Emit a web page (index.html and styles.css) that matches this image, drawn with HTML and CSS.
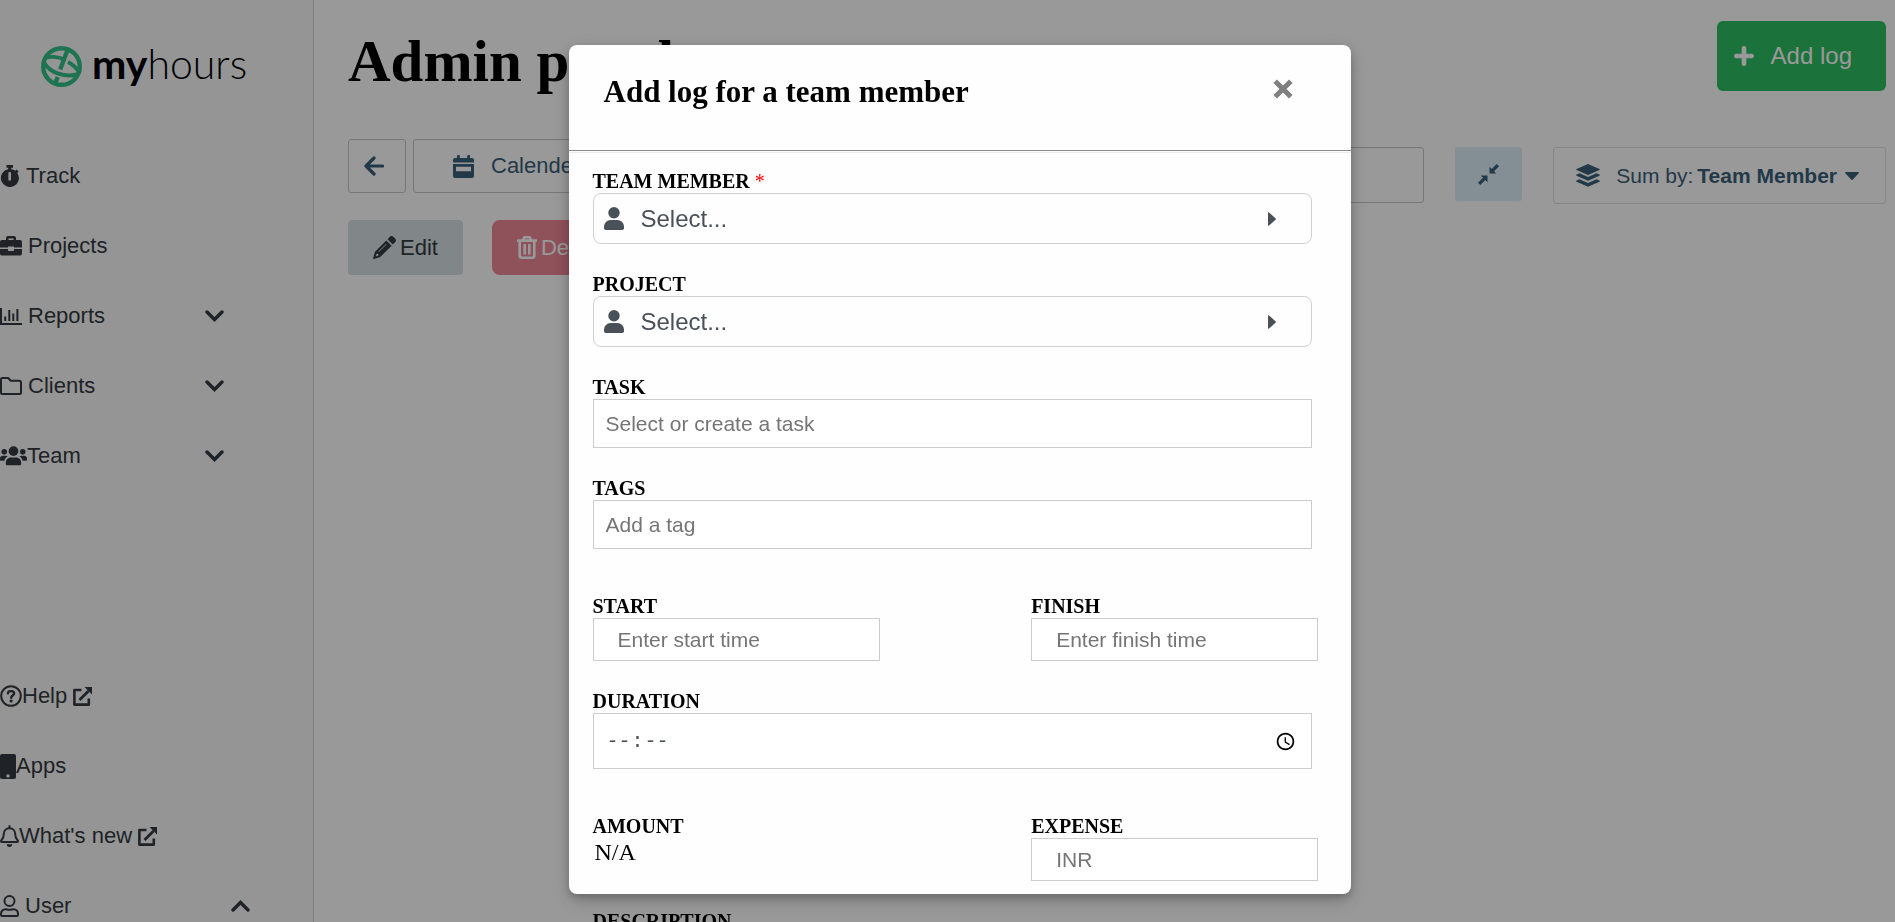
FILE: index.html
```html
<!DOCTYPE html>
<html lang="en">
<head>
<meta charset="utf-8">
<title>My Hours - Admin panel</title>
<link rel="stylesheet" href="styles.css">
</head>
<body>
<svg class="sprite" aria-hidden="true">
  <symbol id="chevron" viewBox="0 0 19 12"><path d="M2 2l7.500 7.500L17 2" fill="none" stroke="currentColor" stroke-width="3.400" stroke-linecap="round"/></symbol>
  <symbol id="external" viewBox="0 0 19 19"><path d="M8.500 3H1.400v14.600h14.400V11.500" fill="none" stroke="currentColor" stroke-width="2.600" stroke-linejoin="round"/><path d="M6.500 13L15.500 4" fill="none" stroke="currentColor" stroke-width="2.900"/><path d="M11.500 0H19v7.500z" fill="currentColor"/></symbol>
  <symbol id="person" viewBox="0 0 20 23"><circle cx="10" cy="5.700" r="5.700"/><path d="M0 19.500A6.500 6.500 0 0 1 6.500 13h7a6.500 6.500 0 0 1 6.500 6.500v1.700A1.800 1.800 0 0 1 18.200 23H1.800A1.800 1.800 0 0 1 0 21.200z"/></symbol>
  <symbol id="caret-right" viewBox="0 0 8 14"><path d="M0 .8v12.400c0 .6.600.8 1 .4L7.700 7.600a.8.8 0 0 0 0-1.200L1 .4C.6 0 0 .2 0 .8z"/></symbol>
</svg>

<div class="app">
  <aside class="sidebar">
    <a class="logo" href="#" aria-label="myhours">
      <svg width="41" height="41" viewBox="0 0 41 41" fill="none" stroke="currentColor">
        <circle cx="20.500" cy="20.500" r="18.300" stroke-width="4.400"/>
        <path d="M4 12C9 10 17 10.500 23 13.500M27 16C31 18 35 21.500 38 26" stroke-width="3.800"/>
        <path d="M3 16.500C9 27 24 32 37.500 28" stroke-width="4"/>
        <path d="M26.500 4L19.200 23.500" stroke-width="4.400"/>
        <path d="M16.800 31l-2.500 6" stroke-width="4.400"/>
      </svg>
      <span class="logo-text"><b>my</b>hours</span>
    </a>
    <nav class="nav">
      <a class="nav-item" href="#">
        <svg width="20" height="22" viewBox="0 0 20 22"><path fill="currentColor" fill-rule="evenodd" d="M6.500 0h6.500v2.800h-1.700v1.400c1.500.2 2.900.8 4 1.600l1.300-1.300 2 2-1.300 1.400A9 9 0 1 1 8.200 4.200V2.800H6.500zM8.400 8.300v6.200c0 .8.500 1.200 1.300 1.200s1.300-.4 1.300-1.200V8.300c0-.8-.5-1.200-1.300-1.200s-1.300.4-1.300 1.200z"/></svg>
        <span>Track</span>
      </a>
      <a class="nav-item" href="#">
        <svg width="22" height="20" viewBox="0 0 22 20"><path fill="currentColor" fill-rule="evenodd" d="M6 4V2a2 2 0 0 1 2-2h6a2 2 0 0 1 2 2v2h4a2 2 0 0 1 2 2v5.500h-8V10.500H8v1H0V6a2 2 0 0 1 2-2zm2.500 0h5V2.500h-5zM0 13h8v1c0 .6.400 1 1 1h4c.6 0 1-.4 1-1v-1h8v4.500a2 2 0 0 1-2 2H2a2 2 0 0 1-2-2z"/></svg>
        <span>Projects</span>
      </a>
      <a class="nav-item" href="#">
        <svg width="22" height="17" viewBox="0 0 22 17"><path fill="none" stroke="currentColor" stroke-width="2" d="M1 0v16h21M5.200 13V8.500M9.300 13V2M13.300 13V5.500M17.400 13V1"/></svg>
        <span class="nav-label">Reports</span>
        <svg width="19" height="12"><use href="#chevron"/></svg>
      </a>
      <a class="nav-item" href="#">
        <svg width="22" height="18" viewBox="0 0 22 18"><path fill="none" stroke="currentColor" stroke-width="2" stroke-linejoin="round" d="M2.500 1h5.700l2.600 2.800h8.700A1.500 1.500 0 0 1 21 5.300v10.200a1.500 1.500 0 0 1-1.500 1.500h-17A1.500 1.500 0 0 1 1 15.500v-13A1.500 1.500 0 0 1 2.500 1z"/></svg>
        <span class="nav-label">Clients</span>
        <svg width="19" height="12"><use href="#chevron"/></svg>
      </a>
      <a class="nav-item tight" href="#">
        <svg width="27" height="20" viewBox="0 0 28 20" fill="currentColor"><circle cx="14" cy="5" r="5"/><circle cx="4.400" cy="5.700" r="2.900"/><circle cx="23.600" cy="5.700" r="2.900"/><path d="M6 17.200c0-3.300 2.200-5.700 5-5.700h6c2.800 0 5 2.400 5 5.700v.8c0 1-.7 1.700-1.600 1.700H7.600c-.9 0-1.600-.7-1.600-1.700zM0 12.500C0 11 1.300 9.800 2.900 9.800h3c.8 0 1.500.3 2 .7-1.900 1-3 2.500-3.400 4.500H1.200C.5 15 0 14.500 0 13.800zM28 12.500c0-1.500-1.300-2.700-2.900-2.700h-3c-.8 0-1.500.3-2 .7 1.900 1 3 2.500 3.400 4.500h3.300c.7 0 1.200-.5 1.200-1.200z"/></svg>
        <span class="nav-label">Team</span>
        <svg width="19" height="12"><use href="#chevron"/></svg>
      </a>
    </nav>
    <nav class="nav">
      <a class="nav-item tight" href="#">
        <svg width="22" height="22" viewBox="0 0 22 22" fill="none" stroke="currentColor"><circle cx="11" cy="11" r="9.800" stroke-width="2"/><path d="M8 8.300c.1-1.400 1-2.200 2.500-2.200h1c1.500 0 2.600.9 2.600 2.300 0 2.200-2.900 2-2.900 4.400" stroke-width="2.400" stroke-linecap="round"/><circle cx="11.100" cy="16" r=".8" stroke-width="1.600"/></svg>
        <span class="with-link">Help</span>
        <svg width="19" height="19"><use href="#external"/></svg>
      </a>
      <a class="nav-item tight" href="#">
        <svg width="16" height="25" viewBox="0 0 16 25"><path fill="currentColor" fill-rule="evenodd" d="M2 0h12a2 2 0 0 1 2 2v21a2 2 0 0 1-2 2H2a2 2 0 0 1-2-2V2a2 2 0 0 1 2-2zm6 20.200a1.700 1.700 0 1 0 0 3.400 1.700 1.700 0 0 0 0-3.400z"/></svg>
        <span>Apps</span>
      </a>
      <a class="nav-item tight" href="#">
        <svg width="19" height="22" viewBox="0 0 19 22"><path fill="none" stroke="currentColor" stroke-width="2" stroke-linejoin="round" d="M9.500 3.200c-3.400 0-5.700 2.500-5.700 5.800 0 4-1.300 5.300-2.500 6.500-.5.600-.2 1.500.6 1.500h15.200c.8 0 1.100-.9.600-1.500-1.200-1.200-2.500-2.500-2.500-6.500 0-3.300-2.300-5.800-5.700-5.800zM9.500 3.200V.3"/><path fill="currentColor" d="M6.800 19.300h5.400a2.700 2.700 0 0 1-5.400 0z"/></svg>
        <span class="with-link">What's new</span>
        <svg width="19" height="19"><use href="#external"/></svg>
      </a>
      <a class="nav-item nav-user" href="#">
        <svg width="19" height="22" viewBox="0 0 19 22" fill="none" stroke="currentColor" stroke-width="2"><circle cx="9.500" cy="6" r="5"/><path d="M1 19c0-2.900 2-4.800 4.500-4.800 1.300 0 2 .5 4 .5s2.700-.5 4-.5c2.500 0 4.500 1.900 4.500 4.800v.5c0 .9-.6 1.500-1.500 1.500h-14c-.9 0-1.500-.6-1.500-1.500z"/></svg>
        <span class="nav-label">User</span>
        <svg class="flip" width="19" height="12"><use href="#chevron"/></svg>
      </a>
    </nav>
  </aside>

  <main class="main">
    <header class="page-head">
      <h1>Admin panel</h1>
      <button class="add-log" type="button">
        <svg width="20" height="20" viewBox="0 0 20 20"><path fill="none" stroke="currentColor" stroke-width="4.600" stroke-linecap="round" d="M10 2.300v15.400M2.300 10h15.400"/></svg>
        Add log
      </button>
    </header>

    <div class="toolbar">
      <button class="tool back" type="button" aria-label="Back">
        <svg width="20" height="20" viewBox="0 0 20 20"><path fill="none" stroke="currentColor" stroke-width="3.200" stroke-linecap="round" stroke-linejoin="round" d="M10 2L2 10l8 8M2.500 10h16"/></svg>
      </button>
      <button class="tool calendar" type="button">
        <svg width="21" height="23" viewBox="0 0 21 23"><path fill="currentColor" fill-rule="evenodd" d="M4 1.200a1.300 1.300 0 0 1 2.800 0V3h7.400V1.200a1.300 1.300 0 0 1 2.800 0V3h2a2 2 0 0 1 2 2v2.500H0V5a2 2 0 0 1 2-2h2zM0 9h21v12a2 2 0 0 1-2 2H2a2 2 0 0 1-2-2zm3 2.800v4.400h15v-4.400z"/></svg>
        Calender
      </button>
      <input class="tool range" type="text" aria-label="Date range">
      <button class="tool compress" type="button" aria-label="Collapse">
        <svg width="21" height="21" viewBox="0 0 21 21"><g fill="currentColor"><path d="M11.500 9.500V2.800l2.300 2.300L18.700 0 21 2.300l-5 5 2.300 2.200zM9.500 11.500v6.700l-2.300-2.300L2.300 21 0 18.700l5-5-2.300-2.200z"/></g></svg>
      </button>
      <button class="tool sum" type="button">
        <svg width="24" height="23" viewBox="0 0 24 23" fill="currentColor"><path d="M12 0l11.400 4.900c.6.300.6.900 0 1.200L12 11 .6 6.100C0 5.800 0 5.200.6 4.900zM3.500 9.300L12 13l8.500-3.700 2.900 1.300c.6.300.6.900 0 1.200L12 16.800.6 11.800c-.6-.3-.6-.9 0-1.200zM3.500 15.200L12 18.900l8.500-3.700 2.900 1.300c.6.300.6.900 0 1.200L12 22.700.6 17.700c-.6-.3-.6-.9 0-1.200z"/></svg>
        <span class="sum-text"><span>Sum by:</span><b>Team Member</b></span>
        <svg width="14" height="8" viewBox="0 0 14 8"><path fill="currentColor" d="M.8 0h12.400c.7 0 1 .7.500 1.200L7.600 7.700c-.3.400-.9.400-1.200 0L.3 1.200C-.2.700.1 0 .8 0z"/></svg>
      </button>
    </div>

    <div class="actions">
      <button class="action edit" type="button">
        <svg width="23" height="23" viewBox="0 0 23 23"><path fill="currentColor" fill-rule="evenodd" d="M17 .7a2.300 2.300 0 0 1 3.200 0l2.100 2.100c.9.900.9 2.300 0 3.200l-2.500 2.500-5.300-5.300zM13.300 4.400l5.300 5.300L7.200 21 1 22.900c-.6.200-1.100-.3-.9-.9L2 15.800zm-.3 3.600l-7.600 7.600.5.500 7.600-7.600zM3.700 17.600l-1 2.800 2.800-1-.2-1.400-1.300-.2z"/></svg>
        Edit
      </button>
      <button class="action delete" type="button">
        <svg width="20" height="23" viewBox="0 0 20 23" fill="none" stroke="currentColor" stroke-width="2.600"><path d="M0 4.600h20M5.800 4.500L7.300 1.300h5.400l1.500 3.200M2.700 4.600v15.200A1.900 1.900 0 0 0 4.600 21.700h10.800a1.900 1.900 0 0 0 1.900-1.900V4.600M7.700 8v10.500M12.300 8v10.500"/></svg>
        Delete
      </button>
    </div>
  </main>
</div>

<div class="overlay">
  <section class="modal" role="dialog" aria-labelledby="modal-title">
    <header class="modal-head">
      <h2 id="modal-title">Add log for a team member</h2>
      <button class="close" type="button" aria-label="Close">
        <svg width="20" height="20" viewBox="0 0 20 20"><path fill="none" stroke="currentColor" stroke-width="5" d="M2.200 2.200l15.600 15.600M17.800 2.200L2.200 17.800"/></svg>
      </button>
    </header>
    <form class="form">
      <div class="field">
        <label for="member">TEAM MEMBER <span class="required">*</span></label>
        <div class="select">
          <svg width="20" height="23"><use href="#person"/></svg>
          <select id="member"><option>Select...</option></select>
          <svg width="8" height="14"><use href="#caret-right"/></svg>
        </div>
      </div>
      <div class="field">
        <label for="project">PROJECT</label>
        <div class="select">
          <svg width="20" height="23"><use href="#person"/></svg>
          <select id="project"><option>Select...</option></select>
          <svg width="8" height="14"><use href="#caret-right"/></svg>
        </div>
      </div>
      <div class="field">
        <label for="task">TASK</label>
        <input class="text" id="task" type="text" placeholder="Select or create a task">
      </div>
      <div class="field">
        <label for="tags">TAGS</label>
        <input class="text" id="tags" type="text" placeholder="Add a tag">
      </div>
      <div class="pair">
        <div class="half">
          <label for="start">START</label>
          <input class="text short" id="start" type="text" placeholder="Enter start time">
        </div>
        <div class="half">
          <label for="finish">FINISH</label>
          <input class="text short" id="finish" type="text" placeholder="Enter finish time">
        </div>
      </div>
      <div class="field">
        <label for="duration">DURATION</label>
        <input class="text duration" id="duration" type="time">
      </div>
      <div class="pair">
        <div class="half">
          <span class="label">AMOUNT</span>
          <span class="amount">N/A</span>
        </div>
        <div class="half">
          <label for="expense">EXPENSE</label>
          <input class="text short" id="expense" type="text" placeholder="INR">
        </div>
      </div>
      <div class="field">
        <label for="description">DESCRIPTION</label>
        <textarea class="text" id="description"></textarea>
      </div>
    </form>
  </section>
</div>
</body>
</html>
```

FILE: styles.css
```css
* {
  box-sizing: border-box;
}

body {
  margin: 0;
  height: 100vh;
  overflow: hidden;
  background: #fff;
  font-family: "Liberation Sans", Arial, sans-serif;
  font-size: 22px;
  color: #343a40;
}

button,
input,
select,
textarea {
  margin: 0;
  font: inherit;
  color: inherit;
}

svg {
  flex: none;
}

.sprite {
  position: absolute;
  width: 0;
  height: 0;
}

.app {
  display: flex;
  height: 100vh;
}

/* Sidebar */

.sidebar {
  flex: none;
  width: 314px;
  overflow: hidden;
  background: #f8f9fa;
  border-right: 1px solid #d4d4d4;
}

.logo {
  display: flex;
  align-items: flex-start;
  gap: 10px;
  height: 91px;
  margin-bottom: 50px;
  padding: 46px 0 0 41px;
  color: #32c088;
  text-decoration: none;
}

.logo-text {
  font-family: Lato, sans-serif;
  font-size: 41px;
  font-weight: 300;
  line-height: 36px;
  color: #000;
}

.logo-text b {
  font-weight: 700;
}

.nav + .nav {
  margin-top: 170px;
}

.nav-item {
  display: flex;
  align-items: center;
  gap: 6px;
  height: 70px;
  padding-right: 89px;
  color: #343a40;
  text-decoration: none;
}

.nav-item.tight {
  gap: 0;
}

.nav-item.nav-user {
  padding-right: 63px;
}

.nav-label {
  flex: 1;
}

.with-link {
  margin-right: 6px;
}

.flip {
  transform: rotate(180deg);
}

/* Page */

.main {
  flex: 1;
  min-width: 0;
  padding: 21px 9px 0 34px;
}

.page-head {
  display: flex;
  justify-content: space-between;
  align-items: flex-start;
  height: 118px;
}

h1 {
  margin: 7px 0 0;
  font-family: "Liberation Serif", "Times New Roman", serif;
  font-size: 59px;
  line-height: 66px;
  color: #000;
}

.add-log {
  display: flex;
  align-items: center;
  gap: 17px;
  height: 70px;
  padding: 0 34px 0 17px;
  border: 0;
  border-radius: 6px;
  background: #2dbf62;
  color: #fff;
  font-size: 24px;
}

.toolbar {
  display: flex;
  align-items: flex-start;
  height: 65px;
}

.tool {
  display: flex;
  align-items: center;
  height: 54px;
  border: 1px solid #c4c8cc;
  border-radius: 3px;
  background: #fff;
  color: #3a6078;
}

.back {
  width: 58px;
  margin-right: 7px;
  padding: 0 0 0 15px;
}

.calendar {
  gap: 17px;
  width: 300px;
  padding: 0 39px;
}

.range {
  flex: 1;
  min-width: 0;
  height: 56px;
  margin: 8px 31px 0 31px;
}

.compress {
  justify-content: center;
  width: 67px;
  margin: 8px 31px 0 0;
  border: 0;
  background: #dcedf8;
}

.sum {
  gap: 8px;
  height: 57px;
  margin-top: 8px;
  padding: 0 26px 0 22px;
  border-color: #dcdfe2;
  font-size: 21px;
}

.sum-text {
  display: flex;
  gap: 4px;
  margin-left: 8px;
}

.actions {
  display: flex;
  gap: 29px;
  margin-top: 16px;
}

.action {
  display: flex;
  align-items: center;
  gap: 4px;
  height: 55px;
  padding: 0 25px;
  border: 0;
  border-radius: 4px;
}

.edit {
  background: #d7dfe5;
}

.delete {
  border-radius: 8px;
  background: #ee8796;
  color: #fff;
}

/* Modal */

.overlay {
  position: fixed;
  inset: 0;
  padding: 45px 0 0 30%;
  overflow: hidden;
  background: rgba(0, 0, 0, 0.4);
}

.modal {
  width: 59%;
  height: calc(100vh - 73px);
  border-radius: 8px;
  background: #fefefe;
  color: #000;
  box-shadow: 0 4px 8px rgba(0, 0, 0, 0.2), 0 6px 20px rgba(0, 0, 0, 0.19);
}

.modal-head {
  display: flex;
  justify-content: space-between;
  height: 106px;
  padding: 29px 58px 0 35px;
  border-bottom: 1px solid #8a8a8a;
}

h2 {
  margin: 0;
  font-family: "Liberation Serif", "Times New Roman", serif;
  font-size: 31px;
  line-height: 36px;
}

.close {
  display: flex;
  align-self: flex-start;
  margin-top: 5px;
  padding: 0;
  border: 0;
  background: none;
  color: #808080;
}

.form {
  margin-top: 1px;
  padding: 16px 33px 0 24px;
  border-top: 1px solid #ececec;
}

.field {
  margin: 0 6px 28px 0;
}

label,
.label {
  display: block;
  font-family: "Liberation Serif", "Times New Roman", serif;
  font-size: 20px;
  font-weight: 700;
  line-height: 24px;
}

.required {
  color: #f00;
  font-weight: 400;
}

.select {
  display: flex;
  align-items: center;
  height: 51px;
  padding: 0 35px 0 10px;
  border: 1px solid #ced0d3;
  border-radius: 8px;
  color: #495057;
  fill: currentColor;
}

.select select {
  flex: 1;
  height: 100%;
  padding: 0 0 0 17px;
  border: 0;
  background: none;
  appearance: none;
  font-size: 24px;
}

.text {
  display: block;
  width: 100%;
  height: 49px;
  padding: 0 12px;
  border: 1px solid #ccc;
  border-radius: 0;
  background: #fff;
  font-size: 21px;
}

.text::placeholder {
  color: #757575;
}

.short {
  height: 43px;
  padding: 0 24px;
}

.pair {
  display: flex;
  justify-content: space-between;
  padding-top: 17px;
  margin-bottom: 28px;
}

.half {
  width: 287px;
}

.duration {
  height: 56px;
  padding: 0 12px;
  color: #495057;
  font-family: "Liberation Mono", "Courier New", monospace;
  font-size: 20px;
}

.duration::-webkit-datetime-edit-ampm-field {
  display: none;
}

.amount {
  display: block;
  padding-left: 2px;
  font-family: "Liberation Serif", "Times New Roman", serif;
  font-size: 24px;
  line-height: 28px;
}
```
